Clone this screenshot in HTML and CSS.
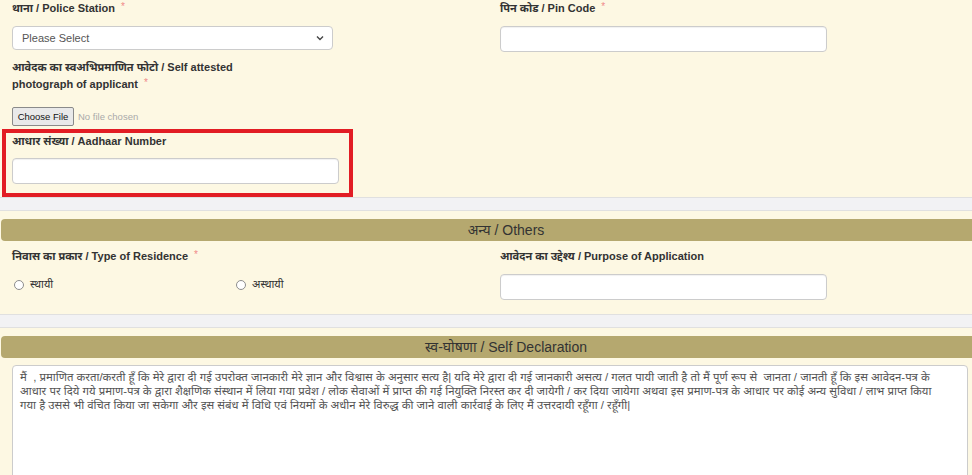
FILE: index.html
```html
<!DOCTYPE html>
<html lang="hi">
<head>
<meta charset="utf-8">
<title>Application Form</title>
<link rel="stylesheet" href="styles.css">
</head>
<body>
<div class="page">
  <section class="panel panel-top">
    <div class="grid">
      <div class="col">
        <div class="group">
          <label class="lbl">थाना / Police Station <span class="req">*</span></label>
          <div class="select-box">
            <span class="select-text">Please Select</span>
            <svg class="chev" width="8" height="6" viewBox="0 0 8 6"><path d="M1 1.5 L4 4.5 L7 1.5" fill="none" stroke="#444" stroke-width="1.4"/></svg>
          </div>
        </div>
        <div class="group g-photo">
          <label class="lbl">आवेदक का स्वअभिप्रमाणित फोटो / Self attested<br>photograph of applicant <span class="req">*</span></label>
          <div class="file-row">
            <button class="file-btn" type="button">Choose File</button>
            <span class="file-none">No file chosen</span>
          </div>
        </div>
        <div class="highlight">
          <label class="lbl">आधार संख्या / Aadhaar Number</label>
          <input class="field" type="text">
        </div>
      </div>
      <div class="col">
        <div class="group">
          <label class="lbl">पिन कोड / Pin Code <span class="req">*</span></label>
          <input class="field" type="text">
        </div>
      </div>
    </div>
  </section>

  <section class="panel">
    <div class="head">अन्य / Others</div>
    <div class="grid">
      <div class="col">
        <label class="lbl lbl-spaced">निवास का प्रकार / Type of Residence <span class="req">*</span></label>
        <div class="radios">
          <span class="radio-opt"><span class="radio"></span>स्थायी</span>
          <span class="radio-opt"><span class="radio"></span>अस्थायी</span>
        </div>
      </div>
      <div class="col">
        <label class="lbl lbl-spaced">आवेदन का उद्देश्य / Purpose of Application</label>
        <input class="field" type="text">
      </div>
    </div>
  </section>

  <section class="panel panel-last">
    <div class="head">स्व-घोषणा / Self Declaration</div>
    <div class="declaration">मैं &nbsp;, प्रमाणित करता/करती हूँ कि मेरे द्वारा दी गई उपरोक्त जानकारी मेरे ज्ञान और विश्वास के अनुसार सत्य है| यदि मेरे द्वारा दी गई जानकारी असत्य / गलत पायी जाती है तो मैं पूर्ण रूप से &nbsp;जानता / जानती हूँ कि इस आवेदन-पत्र के<br>आधार पर दिये गये प्रमाण-पत्र के द्वारा शैक्षणिक संस्थान में लिया गया प्रवेश / लोक सेवाओं में प्राप्त की गई नियुक्ति निरस्त कर दी जायेगी / कर दिया जायेगा अथवा इस प्रमाण-पत्र के आधार पर कोई अन्य सुविधा / लाभ प्राप्त किया<br>गया है उससे भी वंचित किया जा सकेगा और इस संबंध में विधि एवं नियमों के अधीन मेरे विरुद्ध की जाने वाली कार्रवाई के लिए मैं उत्तरदायी रहूँगा / रहूँगी|</div>
  </section>
</div>
</body>
</html>
```
FILE: styles.css
```css
html, body {
  margin: 0;
  padding: 0;
}
body {
  background: #f2f2f4;
  overflow: hidden;
  font-family: "Liberation Sans", Arial, "Noto Sans Devanagari", "Noto Sans", sans-serif;
  color: #333;
}
.page {
  width: 1012px;
}
.panel {
  background: #fdf8e3;
  border-top: 1px solid #e0e0e0;
  border-bottom: 1px solid #e0e0e0;
  padding: 8px 12px 14px;
}
.panel + .panel {
  margin-top: 12px;
}
.panel-top {
  border-top: none;
  padding: 0 12px 0;
}
.panel-last {
  padding-bottom: 40px;
}
.grid {
  display: grid;
  grid-template-columns: 488px 488px;
}
.col {
  display: flex;
  flex-direction: column;
  align-items: flex-start;
}
.lbl {
  display: block;
  font-size: 11px;
  font-weight: bold;
  line-height: 17px;
  color: #333;
}
.req {
  color: #f08a8a;
  font-size: 10px;
  font-weight: normal;
  margin-left: 3px;
  line-height: 0;
  vertical-align: 2px;
}
.select-box {
  margin-top: 9px;
  width: 321px;
  height: 24px;
  box-sizing: border-box;
  border: 1px solid #ccc;
  border-radius: 4px;
  background: #fff;
  display: flex;
  align-items: center;
  justify-content: space-between;
  padding: 0 8px 0 9px;
  font-size: 11px;
  color: #555;
}
.chev {
  display: block;
}
.g-photo {
  margin-top: 9px;
}
.file-row {
  margin-top: 14px;
  display: flex;
  align-items: center;
  gap: 4px;
  height: 19px;
}
.file-btn {
  height: 19px;
  width: 62px;
  padding: 0;
  font-family: "Liberation Sans", Arial, sans-serif;
  font-size: 9.5px;
  color: #111;
  background: #e9e9e9;
  border: 1px solid #8a8a8a;
  border-radius: 2px;
}
.file-none {
  font-size: 9.5px;
  color: #aaa;
}
.highlight {
  margin-top: 3px;
  margin-left: -10px;
  width: 351px;
  box-sizing: border-box;
  border: 4px solid #e21d24;
  padding: 0 10px 9px 6px;
}
.field {
  display: block;
  margin-top: 9px;
  width: 327px;
  height: 26px;
  box-sizing: border-box;
  border: 1px solid #ccc;
  border-radius: 4px;
  background: #fff;
  box-shadow: inset 0 1px 1px rgba(0,0,0,0.06);
  padding: 0 8px;
}
.highlight .field {
  margin-top: 8px;
  width: 327px;
}
.head {
  margin: 0 -11px;
  height: 22px;
  line-height: 22px;
  background: #b5a86f;
  border-radius: 4px;
  text-align: center;
  font-size: 14px;
  color: #333;
}
.lbl-spaced {
  margin-top: 7px;
}
.radios {
  margin-top: 11px;
  display: flex;
  height: 17px;
  align-items: center;
  font-size: 11px;
  color: #333;
}
.radio-opt {
  width: 222px;
  display: flex;
  align-items: center;
  gap: 6px;
  padding-left: 2px;
  box-sizing: border-box;
}
.radio {
  width: 10px;
  height: 10px;
  box-sizing: border-box;
  border: 1px solid #8d8d8d;
  border-radius: 50%;
  background: #fff;
}
.declaration {
  margin-top: 7px;
  width: 956px;
  height: 140px;
  box-sizing: border-box;
  background: #fff;
  border: 1px solid #ccc;
  border-radius: 4px;
  padding: 4px 7px;
  font-size: 11.4px;
  line-height: 14px;
  color: #555;
  white-space: nowrap;
  overflow: hidden;
}
```
